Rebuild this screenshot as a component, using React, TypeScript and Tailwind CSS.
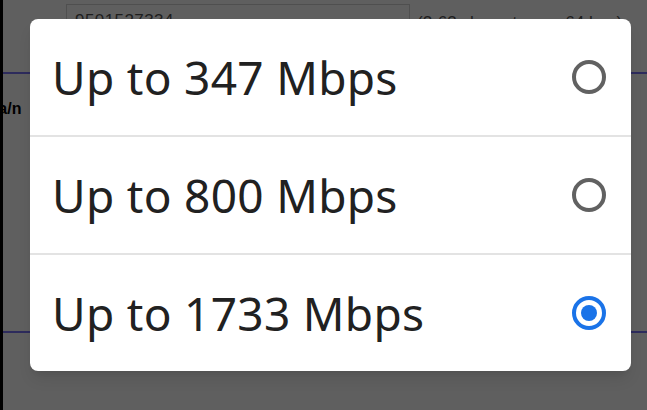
import { useState } from "react";

const options = ["Up to 347 Mbps", "Up to 800 Mbps", "Up to 1733 Mbps"];

function Radio({ checked }: { checked: boolean }) {
    if (checked) {
        return (
            <div className="w-[34px] h-[34px] rounded-full border-[4px] border-[#1a73e8] flex items-center justify-center">
                <div className="w-[16px] h-[16px] rounded-full bg-[#1a73e8]" />
            </div>
        );
    }
    return <div className="w-[34px] h-[34px] rounded-full border-[4px] border-[#616161]" />;
}

export default function App() {
    const [selected, setSelected] = useState(2);

    return (
        <div className="relative w-[647px] h-[410px] overflow-hidden bg-[#5f5f5f] font-['Liberation_Sans',sans-serif]">
            {/* dimmed settings page behind the dialog */}
            <div className="flex h-full">
                <div className="w-[3px] bg-black shrink-0" />
                <div className="flex-1 flex flex-col">
                    <div className="flex items-start pt-[4px] pl-[63px] h-[72px]">
                        <div className="w-[344px] h-[28px] border border-[#4f4f4f] px-[8px] pt-[7px] text-[17px] text-[#1e1e1e] leading-none tracking-wide">
                            9501527334
                        </div>
                        <div className="pl-[7px] pt-[10px] text-[17px] text-[#1e1e1e] leading-none whitespace-nowrap">
                            (2-63 characters or 64 hex)
                        </div>
                    </div>
                    <div className="h-[2px] bg-[#2d2b5c]" />
                    <div className="h-[27px]" />
                    <div className="text-[16px] font-bold text-black leading-none -ml-[10px]">ta/n</div>
                    <div className="flex-1" />
                    <div className="h-[2px] bg-[#2d2b5c] mb-[77px]" />
                </div>
            </div>

            {/* dialog */}
            <div className="absolute left-[30px] top-[19px] w-[601px] bg-white rounded-[8px] shadow-lg font-['Noto_Sans',sans-serif]">
                {options.map((label, i) => (
                    <div key={label}>
                        {i > 0 && <div className="h-[2px] bg-[#e3e3e3]" />}
                        <button
                            onClick={() => setSelected(i)}
                            className="w-full h-[116px] flex items-center justify-between pl-[22px] pr-[25px] text-left"
                        >
                            <span className="text-[46px] tracking-[0.3px] text-[#212121] leading-none">{label}</span>
                            <Radio checked={selected === i} />
                        </button>
                    </div>
                ))}
            </div>
        </div>
    );
}
